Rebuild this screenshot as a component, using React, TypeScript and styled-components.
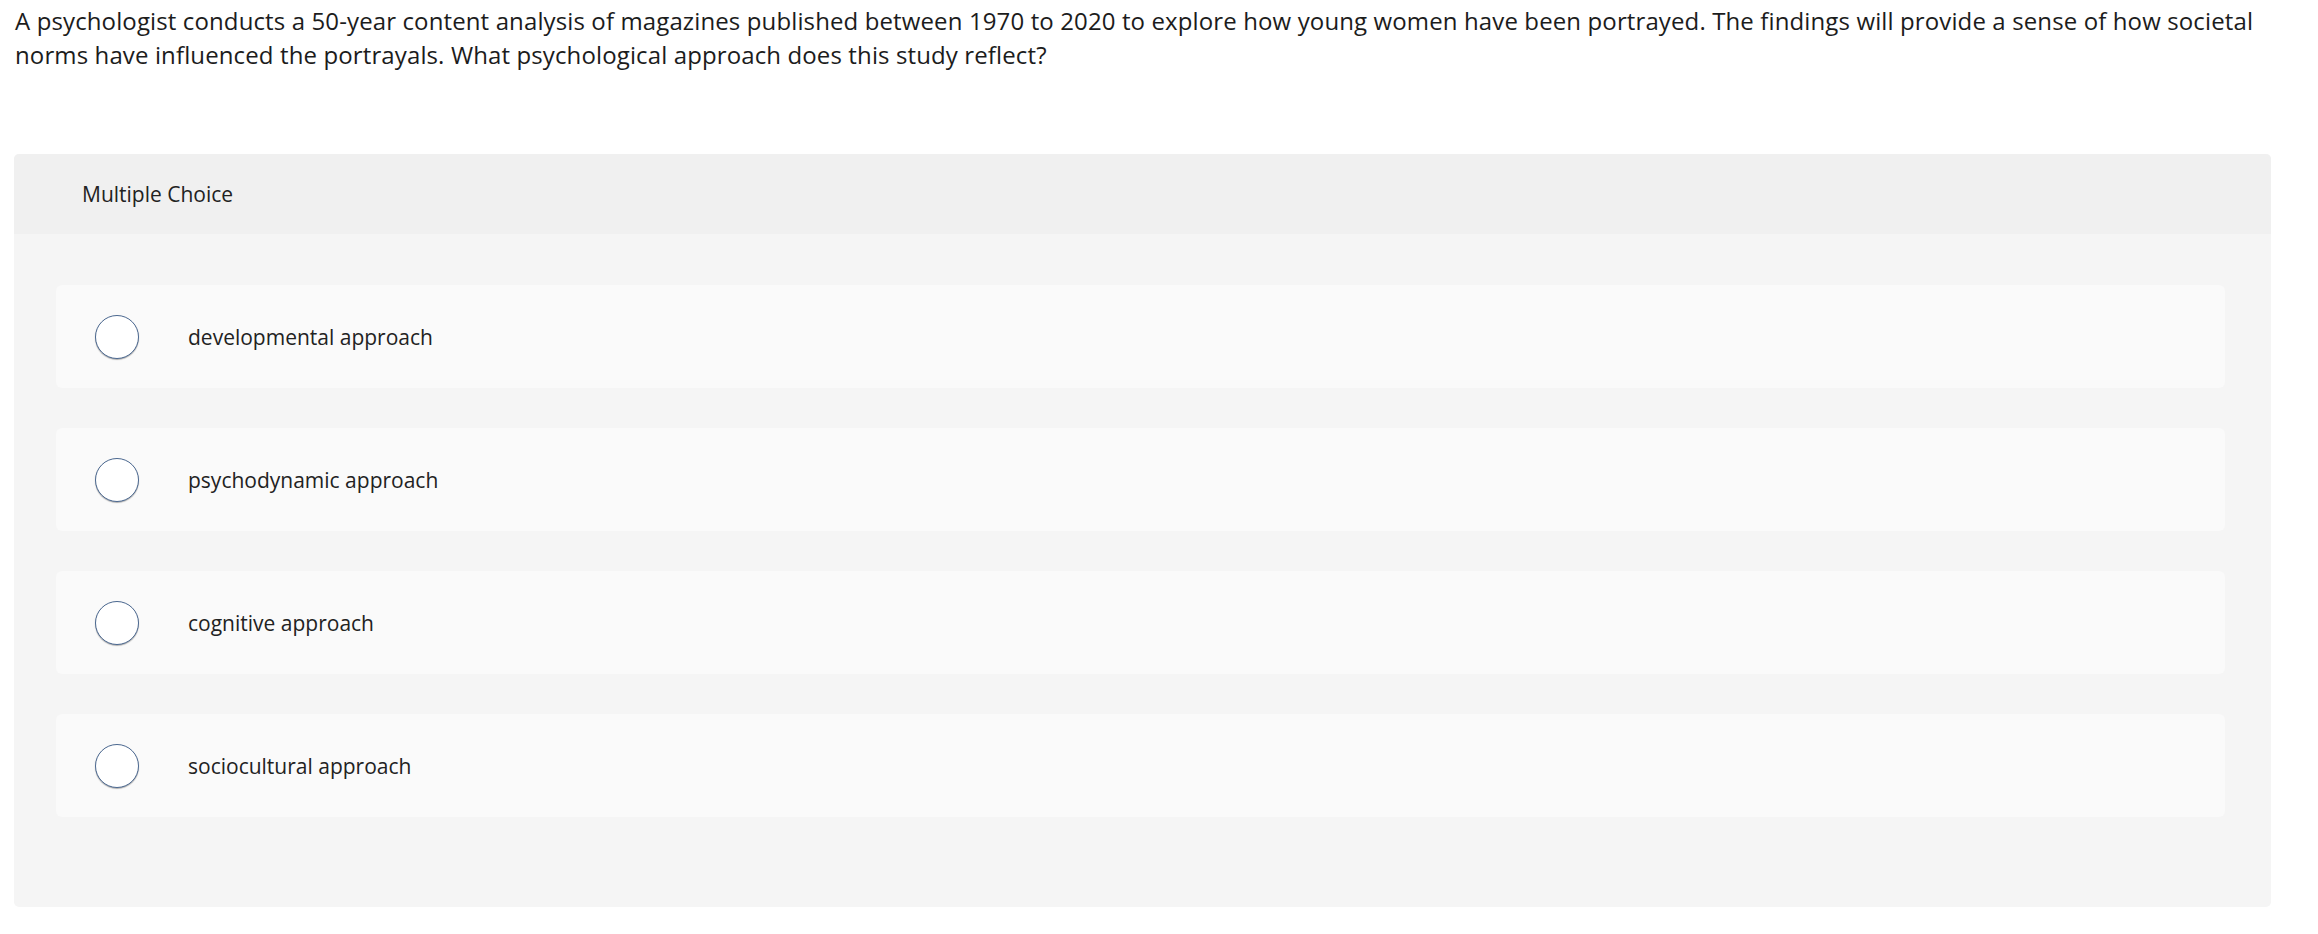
import React from "react";
import styled, { createGlobalStyle } from "styled-components";

const GlobalStyle = createGlobalStyle`
    body {
        margin: 0;
        background: #fff;
        font-family: "Open Sans", Lato, sans-serif;
        color: #1c1c1c;
    }
`;

const Page = styled.div`
    padding: 4px 47px 0 14px;
`;

const Prompt = styled.p`
    margin: 0 0 82px 1px;
    font-size: 24px;
    line-height: 34px;
    letter-spacing: 0.12px;
    color: #1c1c1c;
`;

const Panel = styled.section`
    border-radius: 5px;
    overflow: hidden;
    background: #f5f5f5;
`;

const PanelHeader = styled.div`
    height: 80px;
    display: flex;
    align-items: center;
    padding-left: 68px;
    background: #f0f0f0;
    font-size: 21px;
    color: #222;
`;

const Choices = styled.div`
    display: flex;
    flex-direction: column;
    gap: 40px;
    padding: 51px 46px 90px 42px;
`;

const ChoiceRow = styled.label`
    height: 103px;
    display: flex;
    align-items: center;
    gap: 49px;
    padding-left: 39px;
    background: #fafafa;
    border-radius: 6px;
    cursor: pointer;
`;

const Radio = styled.span`
    width: 44px;
    height: 44px;
    box-sizing: border-box;
    flex-shrink: 0;
    border-radius: 50%;
    background: #fff;
    border: 1.5px solid #4b6890;
    box-shadow: 0 1px 1px rgba(0, 0, 0, 0.3);
`;

const ChoiceText = styled.span`
    font-size: 21px;
    color: #222;
`;

const choices = [
    "developmental approach",
    "psychodynamic approach",
    "cognitive approach",
    "sociocultural approach",
];

export default function App() {
    return (
        <>
            <GlobalStyle />
            <Page>
                <Prompt>
                    A psychologist conducts a 50-year content analysis of magazines published between 1970 to 2020 to
                    explore how young women have been portrayed. The findings will provide a sense of how societal norms
                    have influenced the portrayals. What psychological approach does this study reflect?
                </Prompt>
                <Panel>
                    <PanelHeader>Multiple Choice</PanelHeader>
                    <Choices>
                        {choices.map((c) => (
                            <ChoiceRow key={c}>
                                <Radio />
                                <ChoiceText>{c}</ChoiceText>
                            </ChoiceRow>
                        ))}
                    </Choices>
                </Panel>
            </Page>
        </>
    );
}
